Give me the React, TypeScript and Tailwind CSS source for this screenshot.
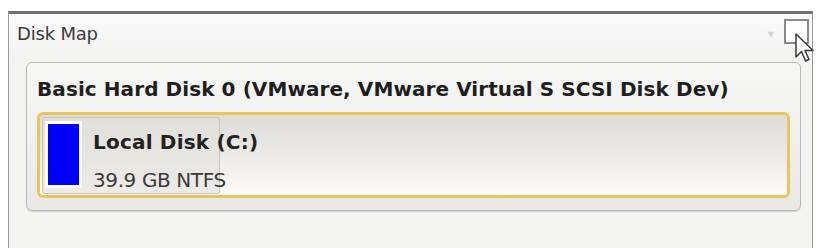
export default function App() {
  return (
    <div className="h-[248px] w-[820px] overflow-hidden bg-white pl-[8px] pr-[7px] pt-[11px] font-['DejaVu_Sans',sans-serif]">
      <div className="relative flex h-[240px] flex-col border-x border-t-[3px] border-x-[#9a9a9a] border-t-[#6f6f6f] bg-[#f4f4f3]">
        {/* panel header */}
        <div className="flex h-[48px] items-start justify-between bg-gradient-to-b from-[#fafafa] to-[#f2f2f1] pl-[8px] pr-[3px] pt-[5px]">
          <span className="pt-[4px] text-[18px] leading-[22px] tracking-[-0.2px] text-[#3a3a3a]">Disk Map</span>
          <div className="flex items-start gap-[10px]">
            <span className="mt-[12px] text-[8px] leading-none text-[#d4d4d4]">▼</span>
            <div className="h-[25px] w-[25px] border-2 border-[#8a8a8a] bg-white" />
          </div>
        </div>

        {/* disk card */}
        <div className="ml-[17px] mr-[11px] h-[149px] rounded-[6px] border border-[#b9b9b7] bg-gradient-to-b from-[#f7f7f6] to-[#e9e8e5] px-[10px] pt-[14px] shadow-[0_1px_1px_rgba(0,0,0,0.15)]">
          <div className="whitespace-nowrap text-[20px] font-bold leading-[24px] tracking-[0.08px] text-[#1e1e1e]">
            Basic Hard Disk 0 (VMware, VMware Virtual S SCSI Disk Dev)
          </div>
          <div className="mt-[11px] h-[86px] rounded-[6px] border-[3px] border-[#e8c65c] bg-gradient-to-b from-[#dedcd7] via-[#eceae6] to-[#fefcfa] p-[2px]">
            <div className="flex h-[77px] w-[178px] items-start gap-[11px] rounded-[3px] border border-[#c9c6c0] bg-[#e3e1dc]/60 pl-[2px] pt-[3px]">
              <div className="h-[67px] w-[37px] shrink-0 border-[3px] border-white bg-[#0000f5]" />
              <div className="flex flex-col whitespace-nowrap pt-[9px]">
                <span className="text-[20px] font-bold leading-[24px] tracking-[0.2px] text-[#222]">Local Disk (C:)</span>
                <span className="mt-[14px] text-[20px] leading-[24px] tracking-[-0.4px] text-[#3b3b3b]">39.9 GB NTFS</span>
              </div>
            </div>
          </div>
        </div>

        {/* mouse cursor */}
        <svg
          className="absolute left-[786px] top-[19px]"
          width="22"
          height="32"
          viewBox="0 0 22 32"
        >
          <path
            d="M1 1 L1 24 L6.5 18.5 L10.5 28 L14 26.5 L10 17.5 L18 17.5 Z"
            fill="#ffffff"
            stroke="#3a3a3a"
            strokeWidth="1.5"
            strokeLinejoin="round"
          />
        </svg>
      </div>
    </div>
  )
}
